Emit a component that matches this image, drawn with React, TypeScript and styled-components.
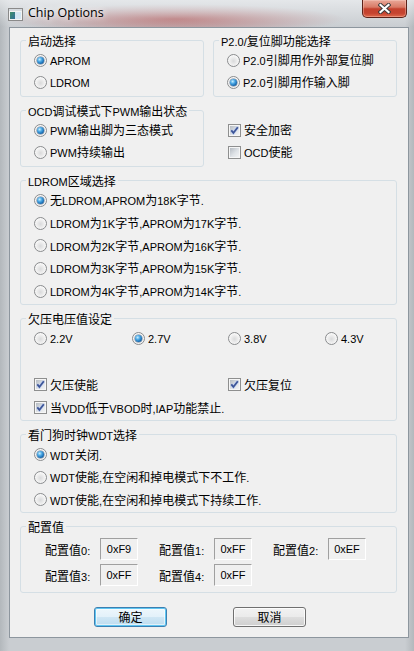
import styled, { createGlobalStyle, css } from "styled-components";

const GlobalStyle = createGlobalStyle`
  html, body {
    margin: 0;
    padding: 0;
  }
  body {
    background: #c4c9cd;
    font-family: "Noto Sans CJK SC", "Liberation Sans", sans-serif;
  }
`;

const Window = styled.div`
  width: 414px;
  height: 651px;
  display: flex;
  flex-direction: column;
  overflow: hidden;
  background:
    radial-gradient(ellipse 170px 15px at 175px 19px, rgba(165, 35, 35, 0.55), rgba(165, 35, 35, 0)),
    linear-gradient(90deg, #b3b8bc 0px, #c9cdd1 9px, #c9cdd1 405px, #b3b8bc 414px);
`;

const TitleBar = styled.div`
  height: 27px;
  flex: none;
  display: flex;
  align-items: flex-start;
  background: linear-gradient(180deg, rgba(240, 242, 244, 0.7) 0px, rgba(255, 255, 255, 0) 27px);
`;

const AppIcon = styled.svg`
  flex: none;
  margin: 8px 0 0 8px;
`;

const Title = styled.span`
  margin: 5px 0 0 5px;
  font-family: "Open Sans", "Noto Sans", sans-serif;
  font-size: 12.5px;
  line-height: 15px;
  color: #000;
  text-shadow: 0 0 6px #fff, 0 0 10px rgba(255, 255, 255, 0.9);
`;

const CloseButton = styled.div`
  margin-left: auto;
  margin-right: 7px;
  width: 45px;
  height: 18px;
  box-sizing: border-box;
  border: 1px solid #5c2219;
  border-top: none;
  border-radius: 0 0 5px 5px;
  background: linear-gradient(
    180deg,
    #e9a898 0%,
    #d97a66 42%,
    #c4412d 52%,
    #c54430 78%,
    #e06a4c 100%
  );
  box-shadow: inset 0 0 0 1px rgba(255, 220, 210, 0.35);
  display: flex;
  align-items: center;
  justify-content: center;
`;

const Client = styled.div`
  margin: 0 5px 0 9px;
  height: 611px;
  flex: none;
  box-sizing: border-box;
  border: 1px solid #8d969e;
  background: #f0f0f0;
  padding: 5px 11px 0 10px;
  display: flex;
  flex-direction: column;
  gap: 6px;
  color: #000;
  font-size: 12px;
`;

const Row = styled.div<{ $gap: number }>`
  display: flex;
  align-items: flex-start;
  gap: ${(p) => p.$gap}px;
`;

const Group = styled.fieldset<{ $width?: number; $grow?: boolean }>`
  margin: 0;
  padding: 0;
  min-width: 0;
  box-sizing: border-box;
  border: 1px solid #d5dfe5;
  border-radius: 3px;
  ${(p) =>
    p.$width &&
    css`
      width: ${p.$width}px;
      flex: none;
    `}
  ${(p) =>
    p.$grow &&
    css`
      flex: 1;
    `}
`;

const Legend = styled.legend`
  margin-left: 5px;
  padding: 0 2px;
  height: 15px;
  font-size: 12px;
  line-height: 15px;
  white-space: nowrap;
`;

const Body = styled.div<{ $pt?: number; $pb?: number; $pl?: number }>`
  padding: ${(p) => p.$pt ?? 1}px 0 ${(p) => p.$pb ?? 2}px ${(p) => p.$pl ?? 13}px;
`;

const Option = styled.div<{ $h?: number }>`
  height: ${(p) => p.$h ?? 22}px;
  display: flex;
  align-items: center;
  gap: 3px;
`;

const Label = styled.span`
  font-size: 12px;
  line-height: 14px;
  white-space: nowrap;
`;

const Latin = styled.span`
  font-family: "Liberation Sans", Arial, sans-serif;
  font-size: 11px;
  line-height: 11px;
`;

const RadioMark = styled.span<{ $on?: boolean }>`
  flex: none;
  width: 13px;
  height: 13px;
  box-sizing: border-box;
  border-radius: 50%;
  border: 1px solid #8a8c8e;
  background: radial-gradient(circle at 50% 55%, #d9dadb 0%, #eeeeee 45%, #f9f9f9 70%, #c9cacb 100%);
  display: flex;
  align-items: center;
  justify-content: center;
  &::after {
    content: "";
    display: ${(p) => (p.$on ? "block" : "none")};
    width: 7px;
    height: 7px;
    border-radius: 50%;
    background: radial-gradient(circle at 38% 35%, #c9efff 0%, #4aa7e4 35%, #1667ad 70%, #0c3d70 100%);
    box-shadow: 0 0 0 0.5px rgba(15, 50, 90, 0.6);
  }
`;

const CheckMark = styled.span`
  flex: none;
  width: 13px;
  height: 13px;
  box-sizing: border-box;
  border: 1px solid #8e8f8f;
  padding: 1px;
  background: #f6f6f6;
  display: flex;
  & > span {
    flex: 1;
    display: flex;
    background: linear-gradient(135deg, #b5bbc2 0%, #dfe3e7 55%, #f2f3f4 100%);
  }
`;

const CheckColumn = styled.div`
  padding-top: 16px;
  display: flex;
  flex-direction: column;
`;

const ColumnsRow = styled.div<{ $cols: string; $h: number }>`
  display: grid;
  grid-template-columns: ${(p) => p.$cols};
  & > div {
    height: ${(p) => p.$h}px;
  }
`;

const Spacer = styled.div<{ $h: number }>`
  height: ${(p) => p.$h}px;
`;

const ValueGrid = styled.div`
  padding: 4px 0 6px 24px;
  display: grid;
  grid-template-columns: repeat(3, 93px);
  column-gap: 21px;
  row-gap: 4px;
`;

const ValueCell = styled.div`
  display: flex;
  align-items: center;
`;

const ValueLabel = styled.span`
  width: 55px;
  padding-top: 2px;
  font-size: 12px;
  line-height: 14px;
  white-space: nowrap;
`;

const ValueBox = styled.div`
  width: 38px;
  height: 22px;
  box-sizing: border-box;
  border: 1px solid;
  border-color: #a0a0a0 #ffffff #ffffff #a0a0a0;
  display: flex;
  align-items: center;
  justify-content: center;
  font-family: "Liberation Sans", Arial, sans-serif;
  font-size: 11px;
`;

const ButtonRow = styled.div`
  margin-top: 8px;
  padding-left: 74px;
  display: flex;
  gap: 66px;
`;

const Button = styled.div<{ $default?: boolean }>`
  width: 73px;
  height: 20px;
  box-sizing: border-box;
  border: 1px solid #707070;
  border-radius: 3px;
  background: linear-gradient(180deg, #f2f2f2 0%, #ebebeb 48%, #dddddd 52%, #cfcfcf 100%);
  box-shadow: inset 0 0 0 1px rgba(255, 255, 255, 0.8);
  display: flex;
  align-items: center;
  justify-content: center;
  font-size: 12px;
  line-height: 14px;
  ${(p) =>
    p.$default &&
    css`
      border-color: #3c7fb1;
      background: linear-gradient(180deg, #eef7fc 0%, #e3f1fa 48%, #cfe6f4 52%, #bcdcef 100%);
      box-shadow: inset 0 0 0 1px #5fc6f2, inset 0 0 0 2px rgba(255, 255, 255, 0.55);
    `}
`;

function Txt({ children }: { children: string }) {
  const parts = children.split(/([\x20-\x7e]+)/).filter(Boolean);
  return (
    <>
      {parts.map((part, i) =>
        /^[\x20-\x7e]+$/.test(part) ? <Latin key={i}>{part}</Latin> : <span key={i}>{part}</span>
      )}
    </>
  );
}

function Radio({ label, on, h }: { label: string; on?: boolean; h?: number }) {
  return (
    <Option $h={h}>
      <RadioMark $on={on} />
      <Label>
        <Txt>{label}</Txt>
      </Label>
    </Option>
  );
}

function Check({ label, on, h }: { label: string; on?: boolean; h?: number }) {
  return (
    <Option $h={h}>
      <CheckMark>
        <span>
          {on && (
            <svg width="9" height="9" viewBox="0 0 9 9">
              <path d="M1.3 4.4 L3.4 6.9 L7.8 1.2" fill="none" stroke="#b9c9ef" strokeWidth="2.8" />
              <path d="M1.3 4.4 L3.4 6.9 L7.8 1.2" fill="none" stroke="#3d5596" strokeWidth="1.7" />
            </svg>
          )}
        </span>
      </CheckMark>
      <Label>
        <Txt>{label}</Txt>
      </Label>
    </Option>
  );
}

function Value({ label, value }: { label: string; value: string }) {
  return (
    <ValueCell>
      <ValueLabel>
        <Txt>{label}</Txt>
      </ValueLabel>
      <ValueBox>{value}</ValueBox>
    </ValueCell>
  );
}

export default function App() {
  return (
    <>
      <GlobalStyle />
      <Window>
        <TitleBar>
          <AppIcon width="15" height="13" viewBox="0 0 15 13">
            <defs>
              <linearGradient id="pane" x1="0" y1="0" x2="1" y2="1">
                <stop offset="0" stopColor="#3f8f6a" />
                <stop offset="1" stopColor="#2f6f9c" />
              </linearGradient>
            </defs>
            <rect x="0.5" y="0.5" width="14" height="12" fill="#f3f3f3" stroke="#8a8a8a" />
            <rect x="1" y="1" width="13" height="2" fill="#d6dbe0" />
            <rect x="2" y="4" width="5" height="7" fill="url(#pane)" />
            <rect x="7" y="4" width="6" height="7" fill="#d3e6f3" />
          </AppIcon>
          <Title>Chip Options</Title>
          <CloseButton>
            <svg width="13" height="11" viewBox="0 0 13 11">
              <path d="M2.5 2 L10.5 9 M10.5 2 L2.5 9" stroke="#3b3b3b" strokeWidth="4" strokeLinecap="square" />
              <path d="M2.5 2 L10.5 9 M10.5 2 L2.5 9" stroke="#ffffff" strokeWidth="2.2" strokeLinecap="square" />
            </svg>
          </CloseButton>
        </TitleBar>

        <Client>
          <Row $gap={9}>
            <Group $width={184}>
              <Legend>
                <Txt>启动选择</Txt>
              </Legend>
              <Body $pb={3}>
                <Radio on label="APROM" />
                <Radio label="LDROM" />
              </Body>
            </Group>
            <Group $grow>
              <Legend>
                <Txt>P2.0/复位脚功能选择</Txt>
              </Legend>
              <Body $pb={3}>
                <Radio label="P2.0引脚用作外部复位脚" />
                <Radio on label="P2.0引脚用作输入脚" />
              </Body>
            </Group>
          </Row>

          <Row $gap={24}>
            <Group $width={184}>
              <Legend>
                <Txt>OCD调试模式下PWM输出状态</Txt>
              </Legend>
              <Body $pb={3}>
                <Radio on label="PWM输出脚为三态模式" />
                <Radio label="PWM持续输出" />
              </Body>
            </Group>
            <CheckColumn>
              <Check on label="安全加密" />
              <Check label="OCD使能" />
            </CheckColumn>
          </Row>

          <Group>
            <Legend>
              <Txt>LDROM区域选择</Txt>
            </Legend>
            <Body $pb={2}>
              <Radio h={22.7} on label="无LDROM,APROM为18K字节." />
              <Radio h={22.7} label="LDROM为1K字节,APROM为17K字节." />
              <Radio h={22.7} label="LDROM为2K字节,APROM为16K字节." />
              <Radio h={22.7} label="LDROM为3K字节,APROM为15K字节." />
              <Radio h={22.7} label="LDROM为4K字节,APROM为14K字节." />
            </Body>
          </Group>

          <Group>
            <Legend>
              <Txt>欠压电压值设定</Txt>
            </Legend>
            <Body $pb={1}>
              <ColumnsRow $cols="98px 96px 97px 1fr" $h={22}>
                <Radio label="2.2V" />
                <Radio on label="2.7V" />
                <Radio label="3.8V" />
                <Radio label="4.3V" />
              </ColumnsRow>
              <Spacer $h={24} />
              <ColumnsRow $cols="194px 1fr" $h={23}>
                <Check on label="欠压使能" />
                <Check on label="欠压复位" />
              </ColumnsRow>
              <Check h={23} on label="当VDD低于VBOD时,IAP功能禁止." />
            </Body>
          </Group>

          <Group>
            <Legend>
              <Txt>看门狗时钟WDT选择</Txt>
            </Legend>
            <Body $pb={1.5}>
              <Radio h={22.5} on label="WDT关闭." />
              <Radio h={22.5} label="WDT使能,在空闲和掉电模式下不工作." />
              <Radio h={22.5} label="WDT使能,在空闲和掉电模式下持续工作." />
            </Body>
          </Group>

          <Group>
            <Legend>
              <Txt>配置值</Txt>
            </Legend>
            <ValueGrid>
              <Value label="配置值0:" value="0xF9" />
              <Value label="配置值1:" value="0xFF" />
              <Value label="配置值2:" value="0xEF" />
              <Value label="配置值3:" value="0xFF" />
              <Value label="配置值4:" value="0xFF" />
            </ValueGrid>
          </Group>

          <ButtonRow>
            <Button $default>确定</Button>
            <Button>取消</Button>
          </ButtonRow>
        </Client>
      </Window>
    </>
  );
}
